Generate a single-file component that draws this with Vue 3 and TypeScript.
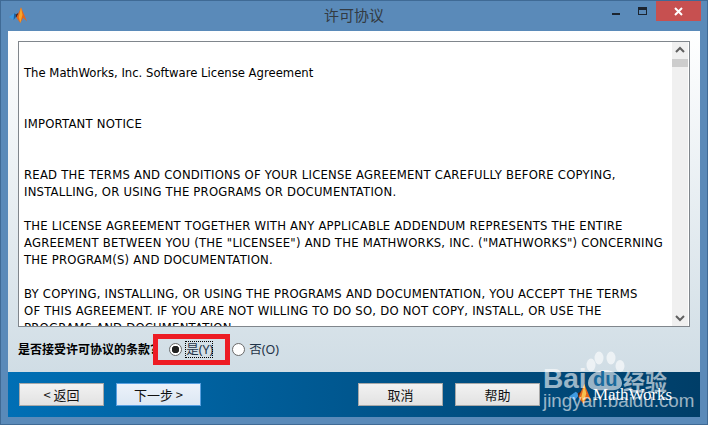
<script setup lang="ts">
const lines: string[] = [
  '', 'The MathWorks, Inc. Software License Agreement', '', '', 'IMPORTANT NOTICE', '', '',
  'READ THE TERMS AND CONDITIONS OF YOUR LICENSE AGREEMENT CAREFULLY BEFORE COPYING,',
  'INSTALLING, OR USING THE PROGRAMS OR DOCUMENTATION.', '',
  'THE LICENSE AGREEMENT TOGETHER WITH ANY APPLICABLE ADDENDUM REPRESENTS THE ENTIRE',
  'AGREEMENT BETWEEN YOU (THE "LICENSEE") AND THE MATHWORKS, INC. ("MATHWORKS") CONCERNING',
  'THE PROGRAM(S) AND DOCUMENTATION.', '',
  'BY COPYING, INSTALLING, OR USING THE PROGRAMS AND DOCUMENTATION, YOU ACCEPT THE TERMS',
  'OF THIS AGREEMENT. IF YOU ARE NOT WILLING TO DO SO, DO NOT COPY, INSTALL, OR USE THE',
  'PROGRAMS AND DOCUMENTATION.'
]
const isCaps = (l: string): boolean => l === l.toUpperCase()
</script>

<template>
  <div class="window">
    <header class="titlebar">
      <svg class="app-icon" width="18" height="17" viewBox="0 0 24 22">
        <path d="M0 13 L7 8 L11 11 L6 17 Z" fill="#3f9ae0" />
        <path d="M6 17 L11 11 L9 9 L7 8 Z" fill="#1d5f9e" />
        <path d="M9 10 L13 7 L10 14 Z" fill="#5a2208" />
        <path d="M10 14 L16 0 L24 19 L19 14 L15 21 Z" fill="#e4651b" />
        <path d="M16 0 L18 10 L15 21 L13 13 Z" fill="#f7a528" />
      </svg>
      <span class="title">许可协议</span>
      <div class="controls">
        <span class="min"></span>
        <span class="max"></span>
        <span class="close">
          <svg width="9" height="9" viewBox="0 0 9 9"><path d="M1 1 L8 8 M8 1 L1 8" stroke="#fff" stroke-width="2" /></svg>
        </span>
      </div>
    </header>

    <main class="client">
      <section class="panel">
        <div class="license">
          <div class="text">
            <div v-for="(l, i) in lines" :key="i" class="line" :class="{ caps: isCaps(l) }">{{ l }}</div>
          </div>
          <div class="scrollbar">
            <svg width="16" height="16" viewBox="0 0 16 16"><path d="M4 10 L8 6 L12 10" fill="none" stroke="#606060" stroke-width="2" /></svg>
            <div class="thumb"></div>
            <div class="track"></div>
            <svg width="16" height="16" viewBox="0 0 16 16"><path d="M4 6 L8 10 L12 6" fill="none" stroke="#606060" stroke-width="2" /></svg>
          </div>
        </div>
        <div class="question">
          <span class="prompt">是否接受许可协议的条款?</span>
          <span class="radio checked"></span>
          <span class="opt focused">是(Y)</span>
          <span class="radio second"></span>
          <span class="opt">否(O)</span>
          <div class="highlight"></div>
        </div>
      </section>

      <footer class="footer">
        <button class="btn">&lt; 返回</button>
        <button class="btn primary">下一步 &gt;</button>
        <button class="btn cancel">取消</button>
        <button class="btn">帮助</button>
        <div class="brand">
          <svg width="25" height="21" viewBox="0 0 24 22">
            <path d="M0 13 L7 8 L11 11 L6 17 Z" fill="#3f9ae0" />
            <path d="M9 10 L13 7 L10 14 Z" fill="#5a2208" />
            <path d="M10 14 L16 0 L24 19 L19 14 L15 21 Z" fill="#e4651b" />
            <path d="M16 0 L18 10 L15 21 L13 13 Z" fill="#f7c050" />
          </svg>
          <span class="brand-name">MathWorks</span>
        </div>
      </footer>
    </main>

    <div class="watermark">
      <svg class="paw" width="44" height="42" viewBox="0 0 44 42">
        <g fill="#fff" fill-opacity=".6">
          <ellipse cx="9" cy="14" rx="4.5" ry="6.5" />
          <ellipse cx="17" cy="7" rx="4.5" ry="6.5" />
          <ellipse cx="29" cy="7" rx="4.5" ry="6.5" />
          <ellipse cx="38" cy="15" rx="4.5" ry="6" />
          <path d="M6 32 C6 24 15 19 23 19 C31 19 40 25 40 32 C40 39 32 40 23 39 C14 40 6 39 6 32 Z" />
        </g>
      </svg>
      <span class="wm-bai">Bai</span>
      <span class="wm-du">du</span>
      <span class="wm-jy">经验</span>
      <span class="wm-url">jingyan.baidu.com</span>
    </div>
  </div>
</template>

<style>
html, body { margin: 0; padding: 0; overflow: hidden; }
</style>

<style scoped>
.window {
  position: relative;
  box-sizing: border-box;
  width: 708px;
  height: 425px;
  border: 1px solid #3f6a95;
  background: #5a8ab9;
  padding: 0 7px 7px;
  display: flex;
  flex-direction: column;
  overflow: hidden;
  font-family: "DejaVu Sans", "Noto Sans CJK SC", sans-serif;
}
.titlebar {
  position: relative;
  height: 30px;
  flex: none;
  display: flex;
  align-items: center;
  justify-content: center;
}
.app-icon { position: absolute; left: 1px; top: 6px; }
.title {
  font: 15px/1 "Noto Sans CJK SC", sans-serif;
  color: #333a42;
  margin-top: -3px;
}
.controls {
  position: absolute;
  top: 0;
  right: -7px;
  width: 94px;
  height: 21px;
}
.min { position: absolute; left: -1px; top: 12px; width: 8px; height: 2px; background: #1c2530; }
.max { position: absolute; left: 25px; top: 6px; width: 7px; height: 4px; border: 1.5px solid #1c2530; border-top-width: 3px; }
.close {
  position: absolute;
  right: 6px;
  top: 0;
  width: 45px;
  height: 20px;
  background: #c75050;
  display: flex;
  align-items: center;
  justify-content: center;
}
.client {
  flex: 1;
  min-height: 0;
  display: flex;
  flex-direction: column;
}
.panel {
  flex: 1;
  min-height: 0;
  padding: 10px 10px 0;
  background: linear-gradient(#ffffff, #d0dde5);
  display: flex;
  flex-direction: column;
}
.license {
  box-sizing: border-box;
  height: 286px;
  border: 1px solid #80868c;
  background: #fff;
  display: flex;
  overflow: hidden;
}
.text {
  flex: 1;
  padding: 6px 0 0 5px;
  overflow: hidden;
  font-size: 11.65px;
  line-height: 17px;
  color: #000;
}
.line { height: 17px; white-space: pre; }
.caps { letter-spacing: 0.22px; }
.scrollbar {
  width: 16px;
  flex: none;
  background: #f0f0f0;
  margin-right: 1px;
  display: flex;
  flex-direction: column;
}
.thumb { height: 8px; background: #cdcdcd; margin-top: 1px; }
.track { flex: 1; }
.question {
  position: relative;
  flex: 1;
  display: flex;
  align-items: center;
  font-size: 12px;
  color: #1a1a1a;
}
.prompt {
  flex: none;
  font: bold 12px "Noto Sans CJK SC", sans-serif;
  color: #000;
  white-space: nowrap;
  margin: -2px 13px 0 0;
}
.radio {
  box-sizing: border-box;
  flex: none;
  width: 13px;
  height: 13px;
  border-radius: 50%;
  border: 1px solid #6a6a6a;
  background: #fff;
}
.radio.checked { background: radial-gradient(circle, #222 0 3.5px, #fff 4px); }
.radio.second { margin-left: 20px; }
.opt {
  font-family: "Noto Sans", "Noto Sans CJK SC", sans-serif;
  font-size: 12.5px;
  line-height: 15px;
  margin-left: 4px;
  color: #1f3347;
  white-space: nowrap;
}
.focused { width: 26px; outline: 1px dotted #000; }
.highlight {
  position: absolute;
  left: 135px;
  top: 7px;
  width: 77px;
  height: 31px;
  box-sizing: border-box;
  border: 5px solid #ed1c24;
  pointer-events: none;
}
.footer {
  position: relative;
  height: 45px;
  flex: none;
  padding-left: 11px;
  box-sizing: border-box;
  background: linear-gradient(90deg, #006fb5, #003e68);
  display: flex;
  align-items: center;
  gap: 12px;
}
.btn {
  width: 85px;
  height: 23px;
  box-sizing: border-box;
  border: 1px solid #a8a8a8;
  background: linear-gradient(#f2f2f2, #e2e2e2);
  font: 13px "Noto Sans CJK SC", sans-serif;
  color: #111;
  padding: 0;
}
.primary {
  border: 1px solid #5aa0e0;
  background: linear-gradient(#ecf2fa, #dce7f3);
}
.cancel { margin-left: 145px; }
.brand {
  position: absolute;
  left: 560px;
  top: 12px;
  display: flex;
  align-items: center;
}
.brand-name {
  font: 17px "Liberation Serif", serif;
  color: #fff;
  letter-spacing: -0.1px;
}
.watermark { position: absolute; inset: 0; pointer-events: none; color: #fff; }
.paw { position: absolute; left: 581px; top: 350px; }
.wm-bai, .wm-jy, .wm-url { position: absolute; line-height: 1; opacity: .6; }
.wm-du { position: absolute; color: #1a6a9c; }
.wm-bai { left: 542px; top: 364px; font: bold 28px/1 "Liberation Sans", sans-serif; }
.wm-du { left: 592px; top: 368px; font: bold 20px/1 "Liberation Sans", sans-serif; }
.wm-jy { left: 622px; top: 368px; font: bold 22px/1 "Noto Sans CJK SC", sans-serif; }
.wm-url { left: 542px; top: 391px; font: 18.8px/1 "Liberation Sans", sans-serif; }
</style>
